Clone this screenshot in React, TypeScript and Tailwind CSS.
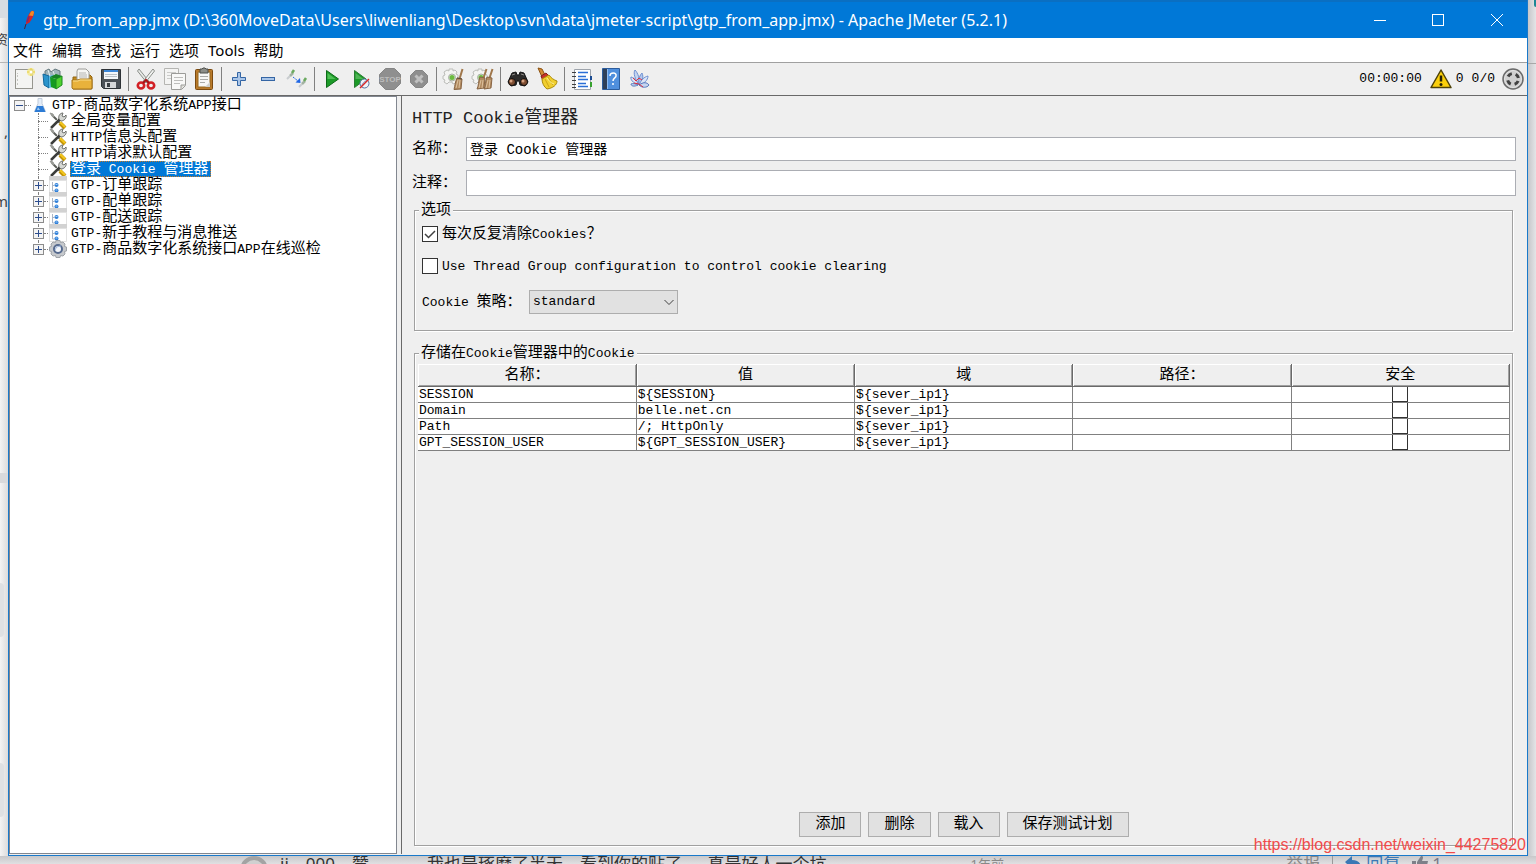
import { useState } from 'react';
import type { ReactNode } from 'react';
import clsx from 'clsx';

const MONO = "font-['Liberation_Mono','Noto_Sans_CJK_SC',monospace]";
const SANS = "font-['Noto_Sans','Noto_Sans_CJK_SC',sans-serif]";

/* Latin runs are set a little smaller than the CJK runs beside them */
function Mixed({ text, large = false }: { text: string; large?: boolean }) {
  const runs = text.match(/[\x20-\x7e]+|[^\x20-\x7e]+/g) ?? [];
  return (
    <span className="whitespace-pre">
      {runs.map((run, i) => {
        const latin = /^[\x20-\x7e]/.test(run);
        return (
          <span
            key={i}
            className={clsx(
              large && (latin ? 'text-[17px]' : 'text-[18px]'),
              !large && (latin ? 'text-[13px]' : 'text-[15px]')
            )}
          >
            {run}
          </span>
        );
      })}
    </span>
  );
}

function Svg({ children, size = 24 }: { children: ReactNode; size?: number }) {
  return (
    <svg width={size} height={size} viewBox={`0 0 ${size} ${size}`} fill="none" className="shrink-0" aria-hidden="true">
      {children}
    </svg>
  );
}

const FeatherIcon = () => (
  <Svg size={22}>
    <path d="M14.500 2c1.500-.5 2.500 0 2.500 1.500 0 3-2 7-4.500 10L9 15.500C9 11 11 5 14.500 2Z" fill="#d2232a" />
    <path d="M14 2.500c1.500-1 3-.5 3 1L16 7l-4-.5Z" fill="#f08a24" />
    <path d="M12 7.500 10 13" stroke="#7a2a75" strokeWidth="1.500" />
    <path d="M9 15 7.500 20" stroke="#4a2036" />
  </Svg>
);

const NewIcon = () => (
  <Svg>
    <rect x="3.500" y="2.500" width="17" height="19" fill="#f4f4f2" stroke="#96968f" />
    <path d="M5.500 8v12M5.500 6v1" stroke="#c4c4c0" strokeDasharray="2 2" />
    <circle cx="19" cy="5" r="4" fill="#f5e98a" opacity=".8" />
    <path d="M19 1v8M15 5h8" stroke="#e6cf45" />
    <circle cx="19" cy="5" r="1.500" fill="#fff" />
  </Svg>
);

const TemplatesIcon = () => (
  <Svg>
    <path d="m4 4 4-2 2 3 4-3 5 2v6H4Z" fill="#9fb4ba" stroke="#64777d" />
    <path d="m7 3 2 6m3-5 2 5" stroke="#e5eef0" />
    <path d="m2 7 6 2v12l-5-3Z" fill="#2a94cc" stroke="#15679a" />
    <path d="m8 9 4-1v12l-4 1Z" fill="#58b9e4" />
    <path d="m9 10 6 2v10l-5-2Z" fill="#149b20" />
    <path d="m15 12 6-3v9l-6 4Z" fill="#4fd12f" stroke="#1a8a1d" />
    <path d="m9 10 6-3 6 2-6 3Z" fill="#168423" />
  </Svg>
);

const OpenIcon = () => (
  <Svg>
    <path d="M3 10h4l2-2h11l2 2v12H3Z" fill="#c18a1d" stroke="#936410" />
    <path d="M7 13V4l1-2h8l3 3v8Z" fill="#f6f6f4" stroke="#9c9c98" />
    <path d="M9 6h7M9 8h8M9 10h8" stroke="#b5b5b2" />
    <path d="M2 13h6l2-1h12v9l-1 1H3l-1-1Z" fill="#e9b23b" stroke="#a5741a" />
    <path d="M3 14h5l2-1h11" stroke="#f9dc8b" />
  </Svg>
);

const SaveIcon = () => (
  <Svg>
    <path d="M2.500 2.500h19v19h-17l-2-2Z" fill="#4b5157" stroke="#2d3236" />
    <path d="M5 3h14v9H5Z" fill="#f3f6fa" />
    <path d="M5 3h14v2H5Z" fill="#3a86d8" />
    <path d="M6 7.500h12M6 9.500h12" stroke="#b8bfc6" />
    <path d="M6 15h11v6H6Z" fill="#d6d8da" />
    <path d="M8 16h3v4H8Z" fill="#3a3f44" />
  </Svg>
);

const CutIcon = () => (
  <Svg>
    <path d="M5 2 3.500 4 13 16l2-1.500Z" fill="#e7e9e6" stroke="#8b8f8a" />
    <path d="m19 2 1.500 2L11 16l-2-1.500Z" fill="#f2f3f1" stroke="#8b8f8a" />
    <ellipse cx="7" cy="18.500" rx="3.200" ry="3" stroke="#d22025" strokeWidth="2.600" />
    <ellipse cx="17" cy="18.500" rx="3.200" ry="3" stroke="#d22025" strokeWidth="2.600" />
    <path d="m9 16 3-3 3 3" stroke="#a90f14" strokeWidth="2" />
  </Svg>
);

const CopyIcon = () => (
  <Svg>
    <path d="M1.500 1.500h14v16h-14Z" fill="#f4f4f3" stroke="#b5b5b2" />
    <path d="M4 5.500h9M4 8.500h4M4 11.500h4" stroke="#cbcbc9" />
    <path d="M8.500 6.500h14v12l-4 4h-10Z" fill="#f8f8f7" stroke="#9b9b98" />
    <path d="M11 10.500h9M11 13.500h9M11 16.500h6" stroke="#bdbdbb" />
    <path d="M22 18h-4v4" fill="#deded9" stroke="#9b9b98" />
  </Svg>
);

const PasteIcon = () => (
  <Svg>
    <rect x="3.500" y="2.500" width="17" height="20" rx="1" fill="#b8792a" stroke="#7a4a10" />
    <path d="M6 5h12v15H6Z" fill="#f7f7f5" stroke="#96691f" />
    <path d="M8 9.500h8M8 12.500h8M8 15.500h5" stroke="#aaaaa7" />
    <path d="M18 15v5h-5Z" fill="#cfcfca" />
    <path d="M8 2h2l1-1h2l1 1h2v4H8Z" fill="#8b8d88" stroke="#4d4f4b" />
  </Svg>
);

const PlusIcon = () => (
  <Svg>
    <path d="M10.500 5.500h3v5h5v3h-5v5h-3v-5h-5v-3h5Z" fill="#a9c5e8" stroke="#3465a4" />
  </Svg>
);

const MinusIcon = () => (
  <Svg>
    <rect x="5.500" y="10.500" width="13" height="3" fill="#a9c5e8" stroke="#3465a4" />
  </Svg>
);

const ToggleIcon = () => (
  <Svg>
    <path d="m2 12 3-3M14 20l3-3" stroke="#c9cdd0" strokeWidth="2" />
    <path d="m5 9 3-3M17 17l3-3" stroke="#a3b3a3" strokeWidth="2.500" />
    <path d="m7 6 2-3M19 14l2-3" stroke="#6aa95e" strokeWidth="2.500" />
    <path d="m8 10 5 4" stroke="#1f66e5" strokeDasharray="2 1" />
    <path d="m15 11 .5 5-5-.5Z" fill="#1f66e5" />
  </Svg>
);

const StartIcon = () => (
  <Svg>
    <path d="M6.500 3.500 18.500 12 6.500 20.500Z" fill="#1c9a28" stroke="#0c6a17" />
    <path d="M7.500 6v6h8Z" fill="#4fc055" />
  </Svg>
);

const StartNoPauseIcon = () => (
  <Svg>
    <path d="M5.500 3.500 17 12 5.500 20.500Z" fill="#1c9a28" stroke="#2a7d33" />
    <path d="M6.500 6v6h8Z" fill="#4fb555" />
    <circle cx="15.500" cy="16.500" r="4.500" fill="#eef2f8" stroke="#53719d" />
    <path d="M13 19.500c0-3 2-5 5-6" stroke="#6f8fc0" />
    <path d="m11 21 9-9" stroke="#d92626" strokeWidth="1.500" />
  </Svg>
);

const StopIcon = () => (
  <Svg>
    <path d="M7.500 1.500h9l6 6v9l-6 6h-9l-6-6v-9Z" fill="#8f8f8f" stroke="#858585" />
    <text x="12" y="15" fontSize="8" fontWeight="700" fill="#bdbdbd" textAnchor="middle" fontFamily="Liberation Sans, sans-serif">
      STOP
    </text>
  </Svg>
);

const ShutdownIcon = () => (
  <Svg>
    <path d="M8.500 3.500h7l5 5v7l-5 5h-7l-5-5v-7Z" fill="#8f8f8f" stroke="#858585" />
    <path d="m8.500 8.500 7 7m0-7-7 7" stroke="#c0c0c0" strokeWidth="3" />
  </Svg>
);

const GearShape = () => (
  <>
    <path
      d="M7 2h4v2l2-1 2 2-1 2 2 1v5l-2 1v2l-3 1-1-2H7l-2 2-3-2 1-2-2-1V9l2-1-1-3 3-2 2 1Z"
      fill="#f4f4f2"
      stroke="#bcbdb9"
    />
    <circle cx="10" cy="10.500" r="3.500" fill="#d6e3cf" stroke="#a7afa3" />
    <circle cx="10" cy="10.500" r="2.500" fill="#6cbb3f" />
  </>
);

const ClearIcon = () => (
  <Svg>
    <GearShape />
    <path d="m20.500 2-3 10" stroke="#a0774b" strokeWidth="2" />
    <path d="m15 11 5 1-1 10-7 .5c1-4 1-7 3-11.500Z" fill="#b18a60" stroke="#886544" />
    <path d="m16 13-2 8m4-8-1 8" stroke="#dec29f" />
    <path d="m15 11 5 1" stroke="#5c4a3b" />
  </Svg>
);

const ClearAllIcon = () => (
  <Svg>
    <GearShape />
    <path d="m15.500 2-3 9m9-9-3 9" stroke="#a0774b" strokeWidth="2" />
    <path d="m9 10 5 1-1 10-7 1c2-4 1-7 3-12Z" fill="#b18a60" stroke="#886544" />
    <path d="m16 10 5 1-1 10-7 1c2-4 1-7 3-12Z" fill="#b18a60" stroke="#886544" />
    <path d="m10 13-2 8m4-8-1 8m6-8-2 8m4-8-1 8" stroke="#dec29f" />
  </Svg>
);

const SearchIcon = () => (
  <Svg>
    <path d="m6 6 4-1 1 3h2l1-3 4 1 4 9-3 4-5-1-1-4h-2l-1 4-5 1-3-4Z" fill="#2c2b2a" stroke="#151515" />
    <path d="m6 8 3-1m6 0 3 1" stroke="#8f8c88" />
    <circle cx="6" cy="15" r="3.500" fill="#7e4d31" stroke="#111" />
    <circle cx="18" cy="15" r="3.500" fill="#7e4d31" stroke="#111" />
    <circle cx="5" cy="14" r="1.500" fill="#d6a382" />
    <circle cx="17" cy="14" r="1.500" fill="#d6a382" />
  </Svg>
);

const SearchResetIcon = () => (
  <Svg>
    <path d="m3 1 4 1 3 6-3 2Z" fill="#d58a34" stroke="#8b5211" />
    <path d="m6 9 5-3 3 3-6 5Z" fill="#c93129" stroke="#85211c" />
    <path d="m7 12 7-4c2 3 5 5 8 6 0 4-4 7-10 8-3-2-5-6-5-10Z" fill="#f1cf2e" stroke="#ab8b0c" />
    <path d="m10 12 4 8m-1-10 5 8" stroke="#cda518" />
    <path d="M12 11c2 3 4 5 7 6" stroke="#fbee95" />
  </Svg>
);

const FunctionIcon = () => (
  <Svg>
    <path d="M4.500 2.500h16v20h-16Z" fill="#fff" stroke="#9da3ab" />
    <path d="M2 5.500h4M2 9.500h4M2 13.500h4M2 17.500h4M2 20.500h4" stroke="#3e3e3e" />
    <path d="M8 5.500h10M8 9.500h8M8 12.500h10M8 16.500h8M8 19.500h10" stroke="#2b6fd6" strokeWidth="1.500" />
    <path d="M20 9h2v4h-2Z" fill="#1a4b92" />
    <path d="M20 15h2v5h-2Z" fill="#37a12e" />
  </Svg>
);

const HelpIcon = () => (
  <Svg>
    <path d="M3.500 1.500h17v21h-17Z" fill="#4f8fdd" stroke="#2c5c9c" />
    <path d="M4 2h4v20H4Z" fill="#2f3f57" />
    <path d="M8.500 2v20" stroke="#8cb9ef" />
    <path d="M11 9c0-4 7-4 6 0 0 2-3 2-3 5" stroke="#fff" strokeWidth="1.500" />
    <circle cx="14" cy="17" r="1" fill="#fff" />
  </Svg>
);

/* Feathers spread from a point at the lower centre */
const FeatherFanIcon = () => (
  <Svg>
    <path d="M11 18C7 12 5 6 7 3c3 3 5 9 4 15Z" fill="#c5d5f1" stroke="#6d8fd1" />
    <path d="M10 18C5 16 2 12 3 10c4 1 7 5 7 8Z" fill="#dce5f6" stroke="#6d8fd1" />
    <path d="M11 18c-1-6 1-10 3-12 2 4 0 9-3 12Z" fill="#b1c7ee" stroke="#6d8fd1" />
    <path d="M11 18c2-5 5-8 9-9 0 4-4 8-9 9Z" fill="#dce5f6" stroke="#6d8fd1" />
    <path d="M11 18c4-3 8-3 10 0-2 3-7 3-10 0ZM10 18c-4 2-7 1-7-1 2-1 5 0 7 1Z" fill="#c5d5f1" stroke="#5779bd" />
    <path d="m5 11 3 3 3-3 3 2M6 16l5 1 4 3" stroke="#df3040" />
  </Svg>
);

const WarningIcon = () => (
  <Svg size={22}>
    <path d="M11 2 21 19.500H1Z" fill="#fbcf0b" stroke="#4e4208" strokeWidth="1.500" strokeLinejoin="round" />
    <path d="M11 7.500v6" stroke="#252006" strokeWidth="2.500" />
    <circle cx="11" cy="16.500" r="1.500" fill="#252006" />
  </Svg>
);

const ThreadsIcon = () => (
  <Svg>
    <circle cx="12" cy="12" r="10" fill="#bdbdbd" stroke="#6b6b6b" strokeWidth="1.500" />
    <circle cx="12" cy="12" r="8.500" fill="#d0d0d0" stroke="#e4e4e4" />
    <circle cx="12" cy="12" r="5.500" stroke="#424242" strokeWidth="3" strokeDasharray="4.600 4.040" strokeDashoffset="6.500" />
  </Svg>
);

const FlaskIcon = () => (
  <Svg size={16}>
    <path d="M6 1.500h4v5l3.500 8h-11l3.500-8Z" fill="#e4edf8" stroke="#c0cbd9" />
    <path d="m5 9-2.500 6h11L11 9Z" fill="#2c7bd5" />
    <path d="m6 10-1 3h3Z" fill="#9ccaf5" />
  </Svg>
);

const ConfigIcon = () => (
  <Svg size={18}>
    <path d="m3 3 8 8" stroke="#5c5e5a" strokeWidth="2" />
    <path d="m11 11 5 5" stroke="#c39408" strokeWidth="4" />
    <path d="m11 10 5 5" stroke="#f2c61e" strokeWidth="2" />
    <path d="m2 16 9-9" stroke="#3c3d3b" strokeWidth="2.500" />
    <path d="m1 15 8-8" stroke="#b9bbb7" />
    <path d="M10 7c-1-3 1-6 4-6l-1 3 2 1 2-2c1 3-2 6-5 6Z" fill="#d6d8d4" stroke="#6f716d" />
    <path d="m1 1 3 1 1 3-2-1Z" fill="#999b96" stroke="#999b96" />
  </Svg>
);

const ControllerIcon = () => (
  <Svg size={18}>
    <path d="M0 0h18v5H0Z" fill="#d2d2d2" />
    <path d="M.5 4.500h17v13H.5Z" fill="#fff" stroke="#e2e2e2" />
    <path d="M3.500 6v9h2M3.500 9.500h2" stroke="#aab5c5" />
    <circle cx="7.500" cy="9" r="2" fill="#2f7fd8" />
    <circle cx="7.500" cy="14.500" r="2" fill="#2f7fd8" />
    <path d="M6.500 8h2v1h-2ZM6.500 13.500h2v1h-2Z" fill="#9fcbf5" />
  </Svg>
);

const ThreadGroupIcon = () => (
  <Svg size={18}>
    <path
      d="M7 .5h4l.5 2L14 2l2 2-.5 2.500 2 .5v4l-2 .5L16 14l-2 2-2.500-.5-.5 2H7l-.5-2L4 16l-2-2 .5-2.500-2-.5V7l2-.5L2 4l2-2 2.500.5Z"
      fill="#c6c9cd"
      stroke="#9ea2a7"
    />
    <circle cx="9" cy="9" r="4" fill="#f3f6fa" stroke="#566a8e" strokeWidth="2" />
    <path d="M6 10c1-3 3-4 6-4" stroke="#9db7df" />
  </Svg>
);

const ReplyIcon = () => (
  <svg width="17" height="14" viewBox="0 0 17 14" fill="#3a78b5" aria-hidden="true">
    <path d="M7 0v4c6 0 9 3 10 9-2-3-5-4-10-4v4L0 6Z" />
  </svg>
);

const ThumbIcon = () => (
  <svg width="16" height="14" viewBox="0 0 16 14" fill="#7d8089" aria-hidden="true">
    <path d="M0 5h4v9H0ZM5 6l4-6c3 0 2 2 1 5h6l-2 9H5Z" />
  </svg>
);

const toolGroups: { name: string; icon: ReactNode; disabled?: boolean }[][] = [
  [
    { name: 'New', icon: <NewIcon /> },
    { name: 'Templates', icon: <TemplatesIcon /> },
    { name: 'Open', icon: <OpenIcon /> },
    { name: 'Save', icon: <SaveIcon /> },
  ],
  [
    { name: 'Cut', icon: <CutIcon /> },
    { name: 'Copy', icon: <CopyIcon /> },
    { name: 'Paste', icon: <PasteIcon /> },
  ],
  [
    { name: 'Expand All', icon: <PlusIcon /> },
    { name: 'Collapse All', icon: <MinusIcon /> },
    { name: 'Toggle', icon: <ToggleIcon /> },
  ],
  [
    { name: 'Start', icon: <StartIcon /> },
    { name: 'Start no pauses', icon: <StartNoPauseIcon /> },
    { name: 'Stop', icon: <StopIcon />, disabled: true },
    { name: 'Shutdown', icon: <ShutdownIcon />, disabled: true },
  ],
  [
    { name: 'Clear', icon: <ClearIcon /> },
    { name: 'Clear All', icon: <ClearAllIcon /> },
  ],
  [
    { name: 'Search', icon: <SearchIcon /> },
    { name: 'Reset Search', icon: <SearchResetIcon /> },
  ],
  [
    { name: 'Function Helper', icon: <FunctionIcon /> },
    { name: 'Help', icon: <HelpIcon /> },
    { name: 'About', icon: <FeatherFanIcon /> },
  ],
];

const menus = ['文件', '编辑', '查找', '运行', '选项', 'Tools', '帮助'];

const treeItems = [
  { label: '全局变量配置', kind: 'config' },
  { label: 'HTTP信息头配置', kind: 'config' },
  { label: 'HTTP请求默认配置', kind: 'config' },
  { label: '登录 Cookie 管理器', kind: 'config' },
  { label: 'GTP-订单跟踪', kind: 'controller' },
  { label: 'GTP-配单跟踪', kind: 'controller' },
  { label: 'GTP-配送跟踪', kind: 'controller' },
  { label: 'GTP-新手教程与消息推送', kind: 'controller' },
  { label: 'GTP-商品数字化系统接口APP在线巡检', kind: 'threads' },
];

const columns = ['名称：', '值', '域', '路径：', '安全'];

const cookies = [
  { name: 'SESSION', value: '${SESSION}', domain: '${sever_ip1}', path: '' },
  { name: 'Domain', value: 'belle.net.cn', domain: '${sever_ip1}', path: '' },
  { name: 'Path', value: '/; HttpOnly', domain: '${sever_ip1}', path: '' },
  { name: 'GPT_SESSION_USER', value: '${GPT_SESSION_USER}', domain: '${sever_ip1}', path: '' },
];

function TitleBar() {
  return (
    <header className={clsx('flex h-[38px] shrink-0 items-center border-t-2 border-[#0a6fc2] bg-[#0078d7] pl-2 text-white', SANS)}>
      <FeatherIcon />
      <h1 className="ml-1 flex-1 truncate text-[16px] leading-5">
        gtp_from_app.jmx (D:\360MoveData\Users\liwenliang\Desktop\svn\data\jmeter-script\gtp_from_app.jmx) - Apache JMeter (5.2.1)
      </h1>
      <div className="flex">
        <button aria-label="Minimize" className="flex h-9 w-[58px] items-center justify-center">
          <span className="h-px w-3 bg-white" />
        </button>
        <button aria-label="Maximize" className="flex h-9 w-[58px] items-center justify-center">
          <span className="size-3 border border-white" />
        </button>
        <button aria-label="Close" className="flex h-9 w-[60px] items-center justify-center">
          <svg width="12" height="12" viewBox="0 0 12 12" stroke="white" aria-hidden="true">
            <path d="m0 0 12 12M12 0 0 12" />
          </svg>
        </button>
      </div>
    </header>
  );
}

function Toolbar() {
  return (
    <div className="flex h-[33px] shrink-0 items-center border-b border-[#696969] pr-[2px]">
      {toolGroups.map((group, i) => (
        <div key={i} className="flex items-center">
          {i > 0 && <span className="mr-[2px] ml-[3px] h-6 w-px bg-[#808080]" />}
          {group.map((tool) => (
            <button
              key={tool.name}
              title={tool.name}
              aria-label={tool.name}
              disabled={tool.disabled}
              className="flex h-7 w-[29px] items-center justify-center"
            >
              {tool.icon}
            </button>
          ))}
        </div>
      ))}
      <div className={clsx('ml-auto flex items-center text-[13px]', MONO)}>
        <span className="mr-2">00:00:00</span>
        <WarningIcon />
        <span className="mr-2 ml-1">0</span>
        <span className="mr-[6px]">0/0</span>
        <button aria-label="Running threads">
          <ThreadsIcon />
        </button>
      </div>
    </div>
  );
}

function Expander({ open = false }: { open?: boolean }) {
  return (
    <button
      aria-label={open ? 'Collapse' : 'Expand'}
      className="relative flex size-[11px] shrink-0 items-center justify-center border border-[#8c8c8c] bg-[#f4f4f4]"
    >
      <svg width="7" height="7" viewBox="0 0 7 7" stroke="#2c4d8e" aria-hidden="true">
        <path d={open ? 'M0 3.500h7' : 'M0 3.500h7M3.500 0v7'} />
      </svg>
    </button>
  );
}

function TestPlanTree() {
  const [selected, setSelected] = useState(3);

  return (
    <aside className="w-[26%] max-w-[388px] shrink-0 border border-[#828790] bg-white">
      <div className="flex h-4 items-center pl-1">
        <Expander open />
        <span className="mr-px w-[6px] border-t border-dotted border-[#808080]" />
        <FlaskIcon />
        <span className="ml-1 leading-4">
          <Mixed text="GTP-商品数字化系统APP接口" />
        </span>
      </div>
      <ul>
        {treeItems.map((item, i) => (
          <li
            key={item.label}
            className={clsx(
              'relative flex h-4 items-center before:absolute before:top-0 before:left-[28px] before:border-l before:border-dotted before:border-[#808080]',
              i === treeItems.length - 1 ? 'before:h-2' : 'before:h-4',
              item.kind === 'config' ? 'pl-[28px]' : 'pl-[23px]'
            )}
          >
            {item.kind !== 'config' && <Expander />}
            <span
              className={clsx(
                'mr-px border-t border-dotted border-[#808080]',
                item.kind === 'config' ? 'w-[10px]' : 'w-1'
              )}
            />
            {item.kind === 'config' && <ConfigIcon />}
            {item.kind === 'controller' && <ControllerIcon />}
            {item.kind === 'threads' && <ThreadGroupIcon />}
            <button
              onClick={() => setSelected(i)}
              className={clsx(
                'ml-[3px] flex h-4 items-center border border-dotted pr-[2px] leading-none',
                selected === i ? 'border-[#c87a28] bg-[#0078d7] text-white' : 'border-transparent'
              )}
            >
              <Mixed text={item.label} />
            </button>
          </li>
        ))}
      </ul>
    </aside>
  );
}

function CheckBox({ label, initial = false }: { label: string; initial?: boolean }) {
  return (
    <label className="flex h-4 items-center gap-1 leading-4">
      <span className="relative flex size-4">
        <input type="checkbox" defaultChecked={initial} className="peer size-4 appearance-none border border-[#333] bg-white" />
        <svg
          className="pointer-events-none absolute inset-0 hidden peer-checked:block"
          width="16"
          height="16"
          viewBox="0 0 16 16"
          fill="none"
          stroke="#404040"
          strokeWidth="1.500"
          aria-hidden="true"
        >
          <path d="m3 8 3.500 3.500L13 5" />
        </svg>
      </span>
      <Mixed text={label} />
    </label>
  );
}

function Group({ title, className, children }: { title: string; className?: string; children: ReactNode }) {
  return (
    <fieldset
      className={clsx(
        'min-w-0 border border-[#a0a0a0] shadow-[1px_1px_0_white,inset_1px_1px_0_white]',
        className
      )}
    >
      <legend className="ml-1 h-4 bg-[#efefef] px-[2px] leading-4">
        <Mixed text={title} />
      </legend>
      {children}
    </fieldset>
  );
}

function CookieTable() {
  return (
    <table className="w-full table-fixed border-collapse bg-white">
      <thead>
        <tr>
          {columns.map((col) => (
            <th
              key={col}
              className="h-[22px] border-r border-b border-[#696969] bg-[#efefef] p-0 leading-none font-normal shadow-[inset_1px_1px_0_white,inset_-1px_-1px_0_#a0a0a0]"
            >
              <Mixed text={col} />
            </th>
          ))}
        </tr>
      </thead>
      <tbody className="text-[13px] leading-[15px]">
        {cookies.map((cookie) => (
          <tr key={cookie.name} className="h-4">
            {[cookie.name, cookie.value, cookie.domain, cookie.path].map((cell, i) => (
              <td key={i} className="border-r border-b border-[#808080] p-0 pl-px whitespace-pre">
                {cell}
              </td>
            ))}
            <td className="border-r border-b border-[#808080] p-0">
              <input
                type="checkbox"
                aria-label={`安全 ${cookie.name}`}
                className="mx-auto block h-[15px] w-4 appearance-none border border-t-0 border-[#333] bg-white"
              />
            </td>
          </tr>
        ))}
      </tbody>
    </table>
  );
}

function CookieManager() {
  return (
    <main className="ml-1 flex min-w-0 flex-1 flex-col border-l border-[#696969] pr-[11px] pb-2 pl-[10px]">
      <h2 className="mt-2 h-7 leading-7 text-[#222]">
        <Mixed text="HTTP Cookie管理器" large />
      </h2>
      <div className="mt-[5px] flex items-center">
        <label htmlFor="name" className="w-[54px] shrink-0 leading-5">
          <Mixed text="名称：" />
        </label>
        <input
          id="name"
          defaultValue="登录 Cookie 管理器"
          className="h-6 min-w-0 flex-1 border border-[#abadb3] bg-white px-[3px] pb-[3px] text-[14px] outline-none"
        />
      </div>
      <div className="mt-[9px] flex items-center">
        <label htmlFor="comment" className="w-[54px] shrink-0 leading-5">
          <Mixed text="注释：" />
        </label>
        <input id="comment" className="h-[26px] min-w-0 flex-1 border border-[#abadb3] bg-white px-[3px] text-[14px] outline-none" />
      </div>

      <Group title="选项" className="mt-[6px] mr-[3px] ml-[2px] pb-4">
        <div className="flex flex-col items-start gap-4 pt-2 pl-[7px]">
          <CheckBox label="每次反复清除Cookies？" initial />
          <CheckBox label="Use Thread Group configuration to control cookie clearing" />
          <div className="flex h-6 items-center">
            <label htmlFor="policy" className="w-[107px] leading-5">
              <Mixed text="Cookie 策略：" />
            </label>
            <div className="relative">
              <select
                id="policy"
                className="block h-6 w-[149px] appearance-none border border-[#adadad] bg-[#e1e1e1] pl-[3px] text-[13px] outline-none"
              >
                <option>standard</option>
                <option>compatibility</option>
                <option>netscape</option>
              </select>
              <svg
                className="pointer-events-none absolute top-[9px] right-1"
                width="10"
                height="7"
                viewBox="0 0 10 7"
                fill="none"
                stroke="#404040"
                aria-hidden="true"
              >
                <path d="m.5 1 4.500 4.500L9.500 1" />
              </svg>
            </div>
          </div>
        </div>
      </Group>

      <Group title="存储在Cookie管理器中的Cookie" className="mt-[14px] mr-[3px] ml-[2px] min-h-0 flex-1">
        <div className="flex h-full flex-col pt-[3px] pr-[2px] pb-2 pl-[3px]">
          <CookieTable />
          <div className="mt-auto flex justify-center gap-[7px]">
            {['添加', '删除', '载入', '保存测试计划'].map((action) => (
              <button key={action} className="h-[25px] border border-[#adadad] bg-[#e1e1e1] px-[15px] text-[15px] leading-none">
                {action}
              </button>
            ))}
          </div>
        </div>
      </Group>
    </main>
  );
}

/* The web page that peeks out around the window */
function PageLeft() {
  return (
    <div className={clsx('w-2 shrink-0 overflow-hidden bg-linear-to-r from-[#f4f4f4] to-[#dcdcdc] text-[#444]', SANS)}>
      <div className="h-[18px] bg-[#d8dde2]" />
      <div className="flex h-[45px] items-center justify-end border-b border-[#b5b5b5] text-[13px]">资</div>
      <div className="mt-[60px] flex h-4 items-center gap-1 text-[15px]">
        <span className="h-4 w-px bg-[#a5d8f5]" />,
      </div>
      <div className="mt-[52px] flex h-5 w-2 justify-end text-[15px] leading-5">m</div>
      <div className="mt-[262px] h-[10px] bg-[#d9dadc]" />
      <div className="mt-[100px] h-[54px] w-1 rounded-r bg-[#dfe1e3]" />
      <div className="mt-[126px] h-[54px] w-1 rounded-r bg-[#dfe1e3]" />
    </div>
  );
}

function PageBottom() {
  return (
    <footer
      className={clsx(
        'flex h-2 shrink-0 items-start overflow-hidden bg-linear-to-b from-[#c8c8ca] to-[#e0e0e2] pl-[240px] text-[17px] leading-4 text-[#333]',
        SANS
      )}
    >
      <span className="size-7 shrink-0 rounded-full border-4 border-[#a3a3a3] bg-[#d0d0d0]" />
      <span className="ml-3 w-[147px] whitespace-nowrap">ij　000　赞</span>
      <span className="whitespace-nowrap">我也是琢磨了半天，看到你的贴了，，真是好人一个坑</span>
      <span className="ml-36 text-[13px] whitespace-nowrap text-[#888]">1年前</span>
      <span className="mr-[94px] ml-auto flex items-start whitespace-nowrap">
        <span className="mr-3 text-[#888]">举报</span>
        <span className="mr-3 h-4 w-px bg-[#999]" />
        <ReplyIcon />
        <a href="#reply" className="mr-3 ml-1 text-[#3a78b5]">
          回复
        </a>
        <ThumbIcon />
        <span className="ml-1 text-[#778]">1</span>
      </span>
    </footer>
  );
}

export default function App() {
  return (
    <div className="relative flex h-screen flex-col overflow-hidden bg-[#dfe0e2] text-black">
      <div className="flex min-h-0 flex-1">
        <PageLeft />
        <div className="flex min-w-0 flex-1 flex-col border-r border-b border-l border-[#1979ca] bg-[#efefef]">
          <TitleBar />
          <nav className={clsx('flex h-[25px] shrink-0 items-center gap-[9px] border-b border-[#a0a0a0] bg-white pl-1 text-[15px] leading-none', SANS)}>
            {menus.map((menu) => (
              <button key={menu}>{menu}</button>
            ))}
          </nav>
          <Toolbar />
          <div className={clsx('flex min-h-0 flex-1 pb-px', MONO)}>
            <TestPlanTree />
            <CookieManager />
          </div>
        </div>
        <div className="w-2 shrink-0 bg-linear-to-r from-[#c6c7ca] to-[#e4e5e7]">
          <div className="h-16 border-b border-[#a8a8a8]">
            <div className="ml-auto h-[7px] w-[2px] rounded-bl bg-[#1c8795]" />
          </div>
        </div>
      </div>
      <PageBottom />
      <p className="pointer-events-none absolute right-[10px] bottom-[10px] font-['Liberation_Sans',sans-serif] text-[16px] leading-[18px] text-[#f24a4a]">
        https://blog.csdn.net/weixin_44275820
      </p>
    </div>
  );
}
